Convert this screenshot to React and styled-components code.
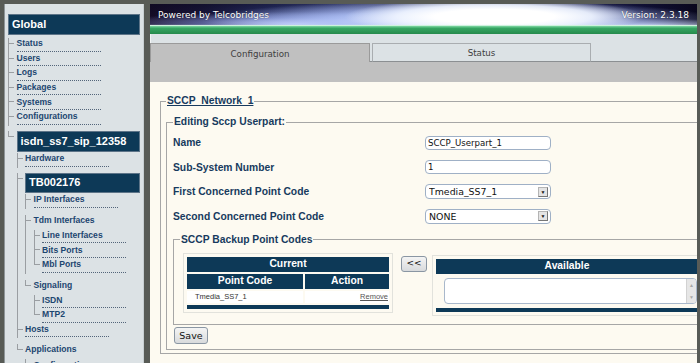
import React from "react";
import styled, { createGlobalStyle, css } from "styled-components";

const GlobalStyle = createGlobalStyle`
  html, body { margin: 0; padding: 0; }
  body {
    background: #585b56;
    font-family: "Liberation Sans", Arial, sans-serif;
    overflow: hidden;
  }
`;

const NAVY = "#0d3957";
const LINK = "#1d4670";
const LABEL = "#173a5e";
const SANS = `"Liberation Sans", Arial, sans-serif`;
const DEJA = `"DejaVu Sans", Verdana, sans-serif`;

const Page = styled.div`
  display: flex;
  align-items: stretch;
  gap: 6px;
  padding: 4px 3px 0 4px;
  height: 363px;
  box-sizing: border-box;
`;

/* ---------- Sidebar ---------- */
const Sidebar = styled.nav`
  width: 140px;
  flex: none;
  box-sizing: border-box;
  background: #dce2e5;
  border-left: 1px solid #8e9598;
  border-right: 1px solid #c8cfd2;
  padding: 10px 3px 0 3px;
  overflow: hidden;
`;

const NodeHeader = styled.div`
  background: ${NAVY};
  color: #fff;
  font: bold 11px/1 ${SANS};
  height: ${(p) => (p.$small ? 20 : 21)}px;
  display: flex;
  align-items: center;
  padding-left: 3px;
  box-sizing: border-box;
  border: 1px solid #5d7488;
  white-space: nowrap;
`;

const Branch = styled.div`
  display: flex;
  flex-direction: column;
  padding-top: ${(p) => p.$pt ?? 1}px;
`;

const Row = styled.div`
  position: relative;
  display: flex;
  align-items: flex-start;
  margin-top: ${(p) => p.$mt}px;
  &::before {
    content: "";
    position: absolute;
    left: 0;
    top: 0;
    width: 1px;
    background: #9a9ea2;
    ${(p) => (p.$last ? css`height: 6px;` : css`bottom: 0;`)}
  }
`;

const Tick = styled.span`
  flex: none;
  width: 5px;
  height: 1px;
  background: #9a9ea2;
  margin: 5px 2.5px 0 1px;
`;

const RowBody = styled.div`
  flex: 1;
  min-width: 0;
`;

const LinkText = styled.a`
  display: block;
  width: 84px;
  font: bold 8.6px/10px ${SANS};
  color: ${LINK};
  text-decoration: none;
  white-space: nowrap;
  padding-top: 0.3px;
  padding-bottom: 2.3px;
  border-bottom: 1px dotted #53657a;
  margin-bottom: 1px;
`;

const GroupText = styled.div`
  font: bold 8.6px/10px ${SANS};
  color: ${LINK};
  white-space: nowrap;
  padding-bottom: 5px;
`;

const tree = {
  label: "Global",
  children: [
    { label: "Status" },
    { label: "Users" },
    { label: "Logs" },
    { label: "Packages" },
    { label: "Systems" },
    { label: "Configurations" },
    {
      header: true,
      label: "isdn_ss7_sip_12358",
      children: [
        { label: "Hardware" },
        {
          header: true,
          small: true,
          label: "TB002176",
          children: [
            { label: "IP Interfaces" },
            {
              group: true,
              label: "Tdm Interfaces",
              children: [{ label: "Line Interfaces" }, { label: "Bits Ports" }, { label: "Mbl Ports" }],
            },
            {
              group: true,
              label: "Signaling",
              children: [{ label: "ISDN" }, { label: "MTP2" }],
            },
          ],
        },
        { label: "Hosts" },
        {
          group: true,
          label: "Applications",
          children: [{ label: "Configurations" }],
        },
      ],
    },
  ],
};

function TreeBranch({ items, pt }) {
  return (
    <Branch $pt={pt}>
      {items.map((it, i) => {
        const mt = it.header ? 5 : it.group ? 6 : 0;
        return (
          <Row key={i} $mt={mt} $last={i === items.length - 1}>
            <Tick />
            <RowBody>
              {it.header ? (
                <>
                  <NodeHeader $small={it.small}>{it.label}</NodeHeader>
                  <TreeBranch items={it.children} pt={1.5} />
                </>
              ) : it.group ? (
                <>
                  <GroupText>{it.label}</GroupText>
                  <TreeBranch items={it.children} pt={0} />
                </>
              ) : (
                <LinkText href="#">{it.label}</LinkText>
              )}
            </RowBody>
          </Row>
        );
      })}
    </Branch>
  );
}

/* ---------- Main ---------- */
const Main = styled.main`
  flex: 1;
  min-width: 0;
  display: flex;
  flex-direction: column;
  overflow: hidden;
  background: #fdfaf1;
`;

const Banner = styled.header`
  height: 30px;
  flex: none;
  display: flex;
  align-items: flex-start;
  justify-content: space-between;
  padding: 7px 8px 0 8px;
  box-sizing: border-box;
  color: #fff;
  font: 9px/1 ${DEJA};
  background:
    linear-gradient(to bottom, transparent 0, transparent 68%, rgba(225,250,235,1) 71%, #6fcd96 75%, #36a562 81%, #268a4c 100%),
    radial-gradient(ellipse 150px 18px at 63% 42%, #ffffff 0%, #ffffff 40%, rgba(240,245,255,0.9) 65%, rgba(200,215,255,0) 100%),
    radial-gradient(ellipse 260px 20px at 57% 55%, rgba(230,238,255,1) 0%, rgba(180,198,248,0.8) 50%, rgba(120,140,220,0) 100%),
    radial-gradient(ellipse 190px 12px at 27% 66%, rgba(205,215,255,0.95) 0%, rgba(150,165,235,0.5) 50%, rgba(120,140,220,0) 100%),
    radial-gradient(ellipse 130px 7px at 90% 72%, rgba(215,225,255,0.9) 0%, rgba(120,140,220,0) 100%),
    linear-gradient(180deg, rgba(10,8,30,0.55) 0%, rgba(10,8,30,0) 55%),
    linear-gradient(90deg, #170d28 0%, #1b1940 10%, #2f3a78 22%, #5a6cbc 34%, #9aaae6 46%, #c8d2f4 56%, #8a9ada 68%, #3a448a 80%, #15174a 90%, #08071c 100%);
`;

const BannerText = styled.span`
  text-shadow: 0 0 1px rgba(0,0,0,0.6);
`;

const Strip = styled.div`
  height: 9px;
  flex: none;
  background: #dce2e5;
  border-left: 1px solid #f2f4f5;
`;

const TabRow = styled.div`
  display: flex;
  height: 19px;
  flex: none;
  background: #dce2e5;
  box-shadow: inset 0 -1px 0 #8b8f92;
`;

const Tab = styled.button`
  width: ${(p) => p.$w}px;
  height: 19px;
  margin-right: 2px;
  box-sizing: border-box;
  font: 8.7px/1 ${DEJA};
  color: #3e3e3e;
  cursor: pointer;
  padding: 2px 0 0 0;
  border: 1px solid ${(p) => (p.$active ? "#9a9a9a" : "#a9adb0")};
  border-bottom: ${(p) => (p.$active ? "none" : "1px solid #8b8f92")};
  background: ${(p) => (p.$active ? "#c0c0c0" : "#dce2e5")};
`;

const GreyBand = styled.div`
  height: 20px;
  flex: none;
  background: #c0c0c0;
`;

const Content = styled.section`
  flex: 1;
  padding: 13px 0 0 10px;
  background: #fdfaf1;
`;

const Fieldset = styled.fieldset`
  margin: ${(p) => p.$mt ?? 0}px 0 0 0;
  padding: 0 0 ${(p) => p.$pb ?? 0}px ${(p) => p.$pl ?? 5}px;
  border: 1px solid #a6a6a6;
  min-width: 0;
  width: ${(p) => p.$w}px;
  box-sizing: border-box;
`;

const Legend = styled.legend`
  padding: 0 1px;
  font: bold 10.3px/12px ${SANS};
  color: ${LABEL};
  text-decoration: ${(p) => (p.$u ? "underline" : "none")};
`;

const FormGrid = styled.div`
  display: grid;
  grid-template-columns: 252px 127px;
  row-gap: 9.5px;
  margin-top: 7px;
  align-items: center;
`;

const Label = styled.label`
  font: bold 10.3px/15px ${SANS};
  color: ${LABEL};
`;

const TextInput = styled.input`
  width: 126px;
  height: 14px;
  box-sizing: border-box;
  border: 1px solid #9fb0c6;
  border-radius: 4px;
  padding: 0 2px;
  font: 8.6px/12px ${DEJA};
  color: #111;
  background: #fff;
  outline: none;
`;

const SelectBox = styled.div`
  width: 126px;
  height: 15px;
  box-sizing: border-box;
  border: 1px solid #9fb0c6;
  border-radius: 4px;
  background: #fff;
  display: flex;
  align-items: center;
  padding: 0 2px 0 3px;
`;

const NativeSelect = styled.select`
  flex: 1;
  min-width: 0;
  height: 13px;
  appearance: none;
  border: none;
  background: transparent;
  font: 9.4px/13px ${DEJA};
  color: #111;
  padding: 0;
  outline: none;
`;

const Arrow = styled.span`
  width: 10px;
  height: 10px;
  box-sizing: border-box;
  border: 1px solid #b4b4b4;
  border-right-color: #777;
  border-bottom-color: #777;
  background: #e4e4e4;
  display: flex;
  align-items: center;
  justify-content: center;
  font-size: 5px;
  color: #111;
`;

const BackupRow = styled.div`
  display: flex;
  align-items: flex-start;
  margin: 7px 0 0 3px;
`;

const TableBox = styled.div`
  border: 1px solid #e2e2dc;
  width: ${(p) => p.$w}px;
  box-sizing: border-box;
  padding: 1px;
  margin-top: ${(p) => p.$mt ?? 0}px;
`;

const DataTable = styled.table`
  width: 100%;
  border-collapse: separate;
  border-spacing: 2px;
`;

const HeadCell = styled.th`
  background: ${NAVY};
  color: #fff;
  font: bold 10.3px/1 ${SANS};
  height: 15px;
  padding: 0;
  text-align: center;
  width: ${(p) => p.$w ?? "auto"};
`;

const Cell = styled.td`
  background: #fff;
  height: 12px;
  padding: 0 1px 0 8px;
  font: 7.5px/1 ${SANS};
  color: #333;
  text-align: ${(p) => p.$align ?? "left"};
`;

const RemoveLink = styled.a`
  color: #555;
  text-decoration: underline;
`;

const FootBar = styled.td`
  background: ${NAVY};
  height: 4px;
  padding: 0;
`;

const SmallButton = styled.button`
  height: ${(p) => p.$h}px;
  width: ${(p) => p.$w}px;
  padding: 0;
  box-sizing: border-box;
  border: 1px solid #8a96a3;
  border-radius: 3px;
  background: linear-gradient(#f4f4f4, #d8dadc);
  font: ${(p) => p.$fs}px/1 ${DEJA};
  color: #111;
  margin: ${(p) => p.$m};
  cursor: pointer;
`;

const ListCell = styled.td`
  padding: 2px 1px 2px 8px;
  background: transparent;
`;

const ListBox = styled.div`
  height: 26px;
  box-sizing: border-box;
  border: 1px solid #a9b8cb;
  border-radius: 4px;
  background: #fff;
  display: flex;
  justify-content: flex-end;
  overflow: hidden;
`;

const ScrollCol = styled.div`
  width: 9px;
  background: #e6e6e6;
  border-left: 1px solid #d2d2d2;
  display: flex;
  flex-direction: column;
  align-items: center;
  justify-content: space-around;
  font-size: 5px;
  color: #a8a8a8;
`;

export default function App() {
  return (
    <>
      <GlobalStyle />
      <Page>
        <Sidebar>
          <NodeHeader>{tree.label}</NodeHeader>
          <TreeBranch items={tree.children} pt={3} />
        </Sidebar>
        <Main>
          <Banner>
            <BannerText>Powered by Telcobridges</BannerText>
            <BannerText>Version: 2.3.18</BannerText>
          </Banner>
          <Strip />
          <TabRow>
            <Tab $active $w={220}>Configuration</Tab>
            <Tab $w={219}>Status</Tab>
          </TabRow>
          <GreyBand />
          <Content>
            <Fieldset $w={600} $pl={5} $pb={3}>
              <Legend $u>SCCP_Network_1</Legend>
              <Fieldset $w={620} $mt={9} $pl={6} $pb={5}>
                <Legend>Editing Sccp Userpart:</Legend>
                <FormGrid>
                  <Label>Name</Label>
                  <TextInput defaultValue="SCCP_Userpart_1" />
                  <Label>Sub-System Number</Label>
                  <TextInput defaultValue="1" />
                  <Label>First Concerned Point Code</Label>
                  <SelectBox>
                    <NativeSelect defaultValue="Tmedia_SS7_1">
                      <option>Tmedia_SS7_1</option>
                      <option>NONE</option>
                    </NativeSelect>
                    <Arrow>▼</Arrow>
                  </SelectBox>
                  <Label>Second Concerned Point Code</Label>
                  <SelectBox>
                    <NativeSelect defaultValue="NONE">
                      <option>NONE</option>
                      <option>Tmedia_SS7_1</option>
                    </NativeSelect>
                    <Arrow>▼</Arrow>
                  </SelectBox>
                </FormGrid>
                <Fieldset $w={640} $mt={10} $pl={6} $pb={8}>
                  <Legend>SCCP Backup Point Codes</Legend>
                  <BackupRow>
                    <TableBox $w={210}>
                      <DataTable>
                        <thead>
                          <tr>
                            <HeadCell colSpan={2}>Current</HeadCell>
                          </tr>
                          <tr>
                            <HeadCell $w="116px">Point Code</HeadCell>
                            <HeadCell>Action</HeadCell>
                          </tr>
                        </thead>
                        <tbody>
                          <tr>
                            <Cell>Tmedia_SS7_1</Cell>
                            <Cell $align="right">
                              <RemoveLink href="#">Remove</RemoveLink>
                            </Cell>
                          </tr>
                          <tr>
                            <FootBar colSpan={2} />
                          </tr>
                        </tbody>
                      </DataTable>
                    </TableBox>
                    <SmallButton $w={26} $h={16} $fs={9} $m="3px 5px 0 8px">&lt;&lt;</SmallButton>
                    <TableBox $w={270} $mt={2}>
                      <DataTable>
                        <thead>
                          <tr>
                            <HeadCell $w="256px">Available</HeadCell>
                          </tr>
                        </thead>
                        <tbody>
                          <tr>
                            <ListCell>
                              <ListBox>
                                <ScrollCol>
                                  <span>▲</span>
                                  <span>▼</span>
                                </ScrollCol>
                              </ListBox>
                            </ListCell>
                          </tr>
                          <tr>
                            <FootBar />
                          </tr>
                        </tbody>
                      </DataTable>
                    </TableBox>
                  </BackupRow>
                </Fieldset>
                <SmallButton $w={34} $h={17} $fs={9.5} $m="2px 0 0 1px">Save</SmallButton>
              </Fieldset>
            </Fieldset>
          </Content>
        </Main>
      </Page>
    </>
  );
}
